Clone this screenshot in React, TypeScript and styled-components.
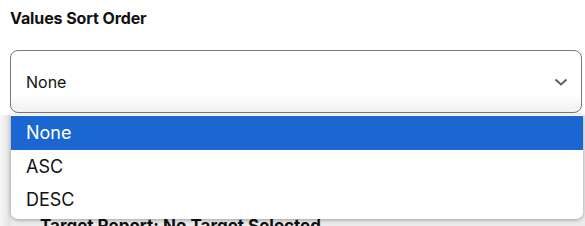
import React, {ReactElement, useState} from 'react';
import styled, {createGlobalStyle} from 'styled-components';

const GlobalStyle = createGlobalStyle`
  body {
    margin: 0;
    background: #ffffff;
    font-family: Inter, "Liberation Sans", sans-serif;
    color: #111;
  }
`;

const Page = styled.div`
  position: relative;
  width: 585px;
  height: 226px;
  overflow: hidden;
`;

const Field = styled.div`
  padding: 8px 3px 0 10px;
`;

const Label = styled.div`
  font-size: 16px;
  font-weight: 700;
  line-height: 20px;
  color: #111;
  letter-spacing: -0.1px;
`;

const SelectBox = styled.div`
  margin-top: 22px;
  height: 61px;
  border: 1px solid #767676;
  border-radius: 8px;
  background: linear-gradient(to bottom, #ffffff 0%, #ffffff 70%, #f1f1f1 100%);
  display: flex;
  align-items: center;
  justify-content: space-between;
  padding: 0 12px 0 15px;
  font-size: 16px;
`;

const Behind = styled.div`
  margin-top: 2px;
  height: 120px;
  background: linear-gradient(to right, #f6f6f6 0px, #e3e3e3 10px, #ececec 12px);
  padding: 101px 0 0 40px;
  box-sizing: border-box;
  font-size: 17px;
  font-weight: 700;
`;

const Menu = styled.ul`
  position: absolute;
  top: 115px;
  left: 11px;
  width: 572px;
  margin: 0;
  padding: 1px 0 2px;
  list-style: none;
  background: #fff;
  border-radius: 0 0 7px 7px;
  box-shadow: 0 1px 4px rgba(0, 0, 0, 0.35);
  overflow: hidden;
`;

const Option = styled.li<{$active: boolean}>`
  height: 33.5px;
  display: flex;
  align-items: center;
  padding-left: 15px;
  font-size: 18px;
  background: ${p => (p.$active ? '#1a67d2' : '#fff')};
  color: ${p => (p.$active ? '#fff' : '#111')};
`;

const Chevron = () => (
    <svg width="16" height="10" viewBox="0 0 16 10">
        <path d="M2.5 2.5 L8 7.5 L13.5 2.5" fill="none" stroke="#5f5f5f" strokeWidth="1.9"/>
    </svg>
);

const options = ['None', 'ASC', 'DESC'];

export default function App(): ReactElement {
    const [selected] = useState('None');

    return (
        <>
            <GlobalStyle/>
            <Page>
                <Field>
                    <Label>Values Sort Order</Label>
                    <SelectBox>
                        <span>{selected}</span>
                        <Chevron/>
                    </SelectBox>
                </Field>
                <Behind>Target Report: No Target Selected</Behind>
                <Menu>
                    {options.map(o => (
                        <Option key={o} $active={o === selected}>{o}</Option>
                    ))}
                </Menu>
            </Page>
        </>
    );
}
